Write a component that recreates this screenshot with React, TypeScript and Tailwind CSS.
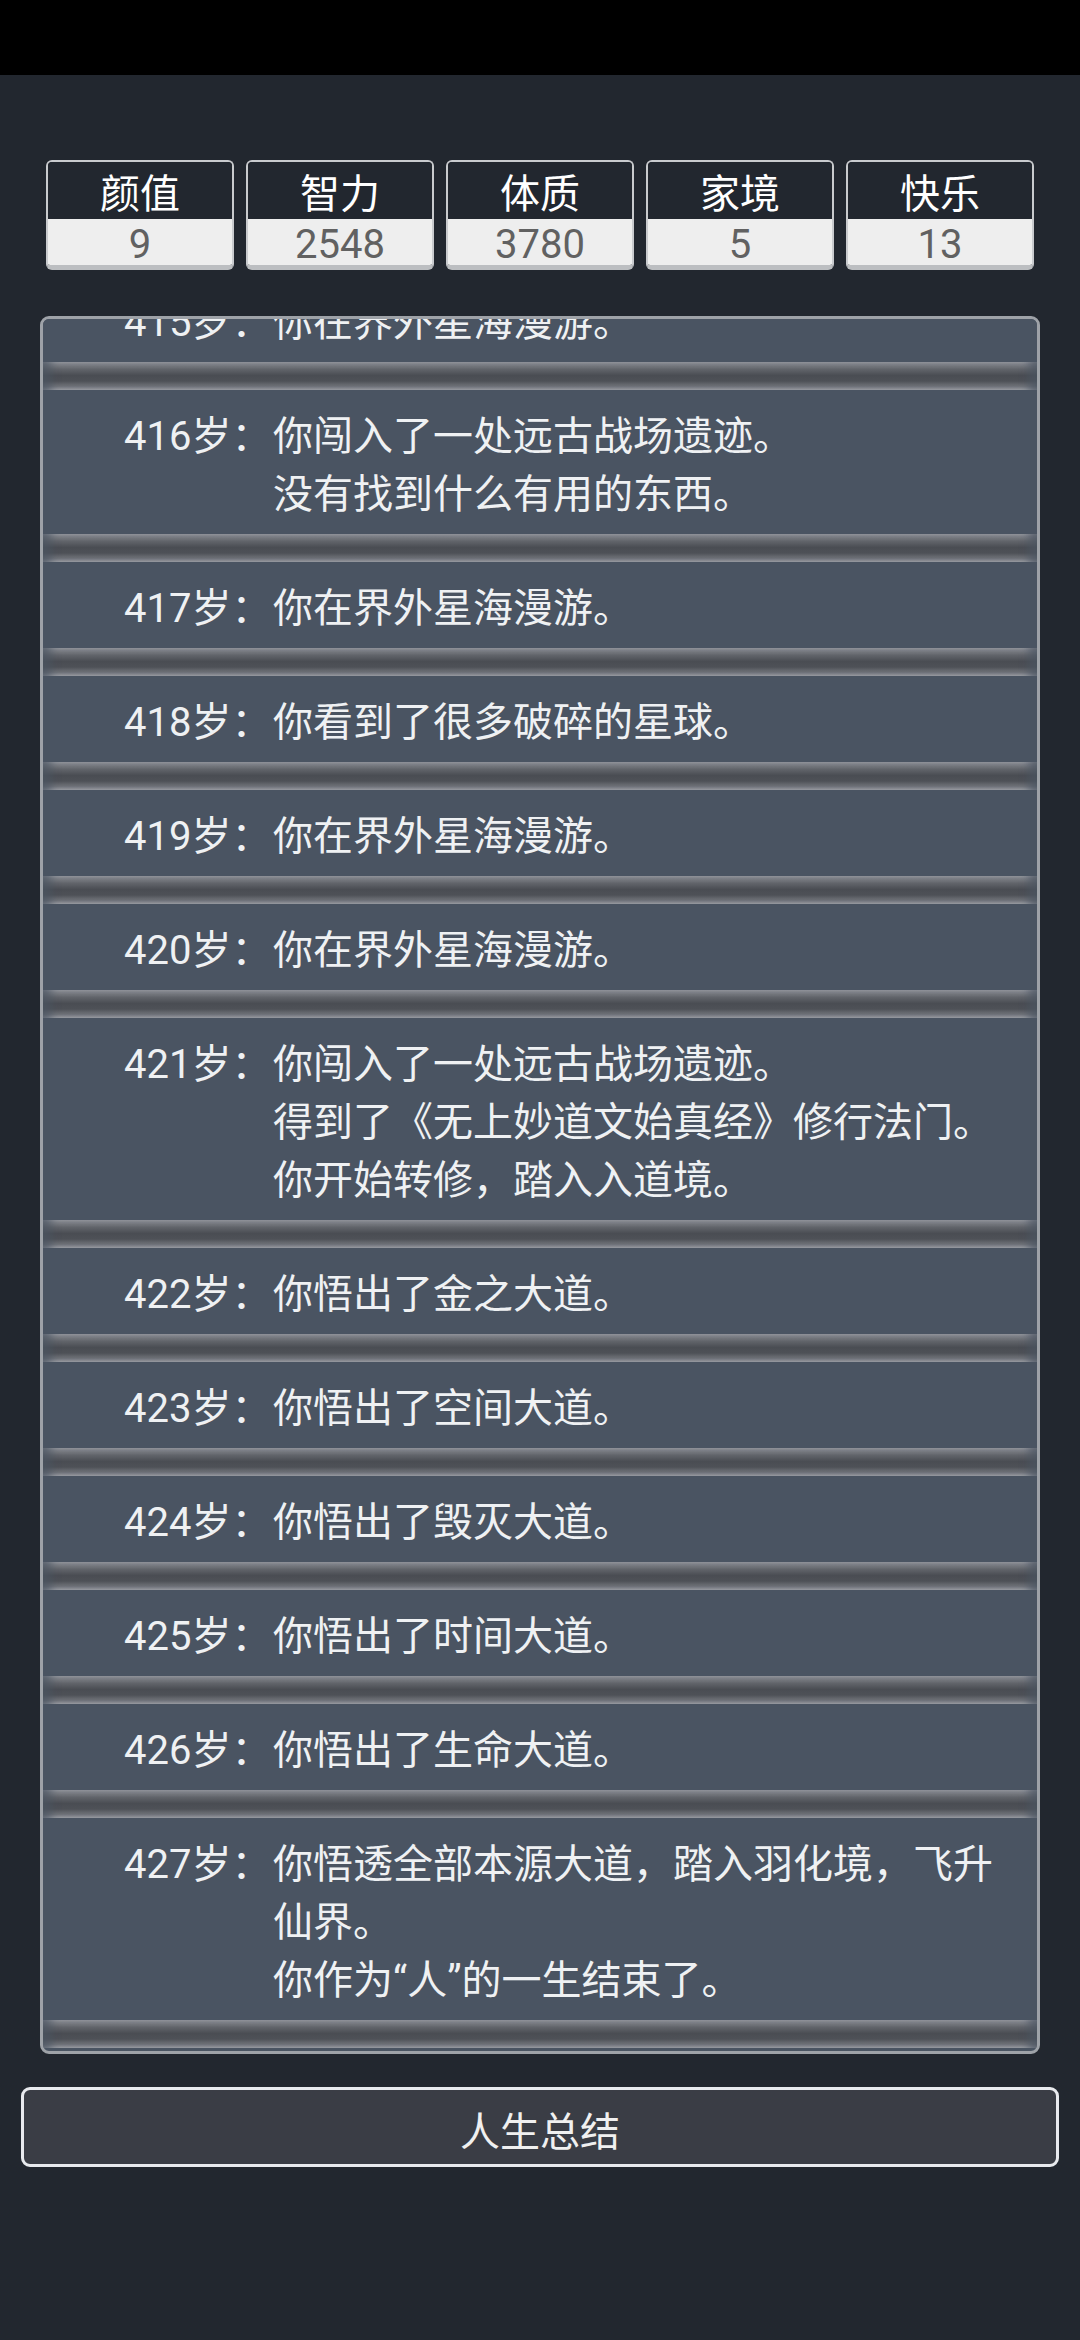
import React from "react";

const stats: [string, string][] = [
  ["颜值", "9"],
  ["智力", "2548"],
  ["体质", "3780"],
  ["家境", "5"],
  ["快乐", "13"],
];

const entries: [number, string[]][] = [
  [415, ["你在界外星海漫游。"]],
  [416, ["你闯入了一处远古战场遗迹。", "没有找到什么有用的东西。"]],
  [417, ["你在界外星海漫游。"]],
  [418, ["你看到了很多破碎的星球。"]],
  [419, ["你在界外星海漫游。"]],
  [420, ["你在界外星海漫游。"]],
  [421, ["你闯入了一处远古战场遗迹。", "得到了《无上妙道文始真经》修行法门。", "你开始转修，踏入入道境。"]],
  [422, ["你悟出了金之大道。"]],
  [423, ["你悟出了空间大道。"]],
  [424, ["你悟出了毁灭大道。"]],
  [425, ["你悟出了时间大道。"]],
  [426, ["你悟出了生命大道。"]],
  [427, ["你悟透全部本源大道，踏入羽化境，飞升仙界。", "你作为“人”的一生结束了。"]],
];

function Separator() {
  return (
    <div className="relative h-[28px] bg-[linear-gradient(to_bottom,#9a9da3_0%,#7f8288_9%,#62656b_25%,#4a4d53_48%,#4e5157_68%,#72757b_88%,#a2a5aa_100%)]">
      <div className="absolute inset-0 shadow-[inset_14px_0_10px_-6px_rgba(74,84,98,0.7),inset_-14px_0_10px_-6px_rgba(74,84,98,0.7)]" />
    </div>
  );
}

export default function App() {
  return (
    <div className="min-h-[2340px] w-[1080px] bg-[#22272f] font-['Roboto','Noto_Sans_CJK_SC',sans-serif] flex flex-col">
      <div className="h-[75px] bg-black shrink-0" />
      <div className="mt-[85px] px-[46px] flex gap-[12px]">
        {stats.map(([k, v]) => (
          <div
            key={k}
            className="flex-1 h-[110px] rounded-[6px] border-x-2 border-t-2 border-b-[5px] border-[#c9cbce] border-b-[#bcbec1] overflow-hidden flex flex-col"
          >
            <div className="h-[59px] pt-[8px] bg-[#22272f] text-[40px] leading-none text-white flex items-center justify-center">
              {k}
            </div>
            <div className="flex-1 pt-[6px] bg-[#eeeeee] text-[40px] leading-none text-[#616161] flex items-center justify-center">
              {v}
            </div>
          </div>
        ))}
      </div>
      <div className="mt-[46px] mx-[40px] h-[1738px] rounded-[9px] border-[3px] border-[#9ea2a8] bg-[#4a5462] overflow-hidden">
        <div className="-mt-[43px] flex flex-col">
          {entries.map(([age, lines]) => (
            <div key={age} className="flex flex-col">
              <div className="flex pt-[18px] pb-[10px] pl-[81px] bg-[#4a5462] text-[40px] leading-[58px] text-[#eff1f3]">
                <div className="w-[149px] shrink-0 whitespace-nowrap">{age}岁：</div>
                <div className="w-[745px] flex flex-col">
                  {lines.map((l, i) => (
                    <div key={i}>{l}</div>
                  ))}
                </div>
              </div>
              <Separator />
            </div>
          ))}
        </div>
      </div>
      <div className="mt-[33px] mx-[21px] h-[80px] pt-[12px] rounded-[9px] border-[3px] border-[#e8eaee] bg-[#3a3d45] text-[40px] leading-none text-[#f0f0f0] flex items-center justify-center">
        人生总结
      </div>
    </div>
  );
}
